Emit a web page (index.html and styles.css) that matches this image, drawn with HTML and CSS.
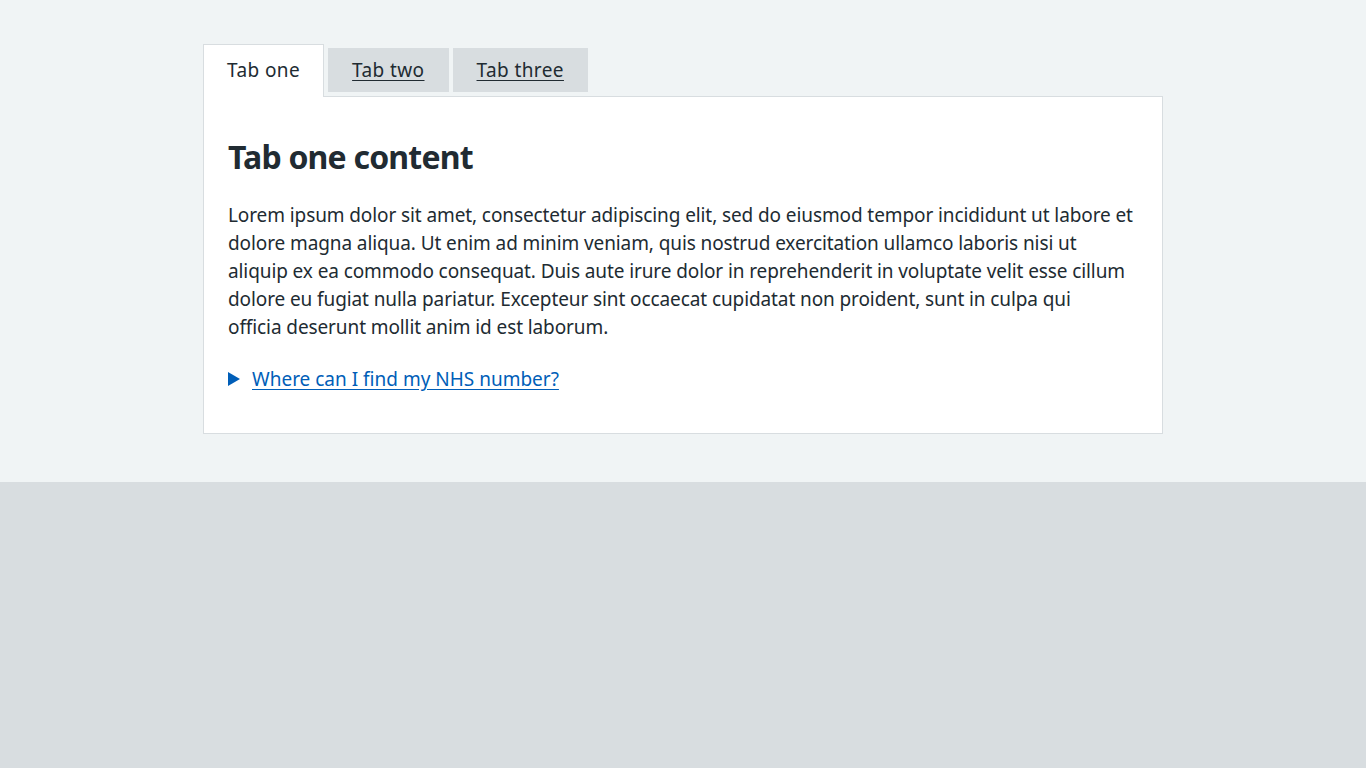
FILE: index.html
```html
<!DOCTYPE html>
<html lang="en">
<head>
<meta charset="utf-8">
<title>Tabs</title>
<link rel="stylesheet" href="styles.css">
</head>
<body>
<main class="wrapper">
  <div class="container">
    <div class="tabs">
      <ul class="tabs-list">
        <li class="tab tab-selected"><a class="tab-link" href="#tab-one">Tab one</a></li>
        <li class="tab"><a class="tab-link" href="#tab-two">Tab two</a></li>
        <li class="tab"><a class="tab-link" href="#tab-three">Tab three</a></li>
      </ul>
      <div class="tab-panel" id="tab-one">
        <h2 class="panel-heading">Tab one content</h2>
        <p class="panel-body">Lorem ipsum dolor sit amet, consectetur adipiscing elit, sed do eiusmod tempor incididunt ut labore et dolore magna aliqua. Ut enim ad minim veniam, quis nostrud exercitation ullamco laboris nisi ut aliquip ex ea commodo consequat. Duis aute irure dolor in reprehenderit in voluptate velit esse cillum dolore eu fugiat nulla pariatur. Excepteur sint occaecat cupidatat non proident, sunt in culpa qui officia&nbsp;deserunt mollit anim id est laborum.</p>
        <div class="details">
          <svg class="details-arrow" width="12" height="14" viewBox="0 0 12 14" aria-hidden="true"><polygon points="0,0 12,7 0,14" fill="#005eb8"/></svg>
          <a class="details-link" href="#">Where can I find my NHS number?</a>
        </div>
      </div>
    </div>
  </div>
</main>
<footer class="footer"></footer>
</body>
</html>
```
FILE: styles.css
```css
html, body {
  margin: 0;
  padding: 0;
}
body {
  font-family: "Noto Sans", "Open Sans", sans-serif;
  color: #212b32;
  background: #d8dde0;
  min-height: 768px;
}
.wrapper {
  background: #f0f4f5;
  padding: 48px 0;
}
.container {
  width: 960px;
  margin: 0 auto;
}
.tabs-list {
  list-style: none;
  margin: 0;
  padding: 0;
  display: flex;
  align-items: flex-start;
}
.tab {
  background: #d8dde0;
  margin-right: 4px;
  padding: 8px 24px;
  font-size: 19px;
  line-height: 28px;
  letter-spacing: 0.4px;
}
.tab-link {
  color: #212b32;
  text-decoration: underline;
  text-underline-offset: 3px;
}
.tab-selected {
  background: #fff;
  border: 1px solid #d8dde0;
  border-bottom: 0;
  margin-top: -4px;
  padding: 11px 23px 13px;
  margin-bottom: -1px;
  position: relative;
  z-index: 1;
}
.tab-selected .tab-link {
  text-decoration: none;
}
.tab-panel {
  background: #fff;
  border: 1px solid #d8dde0;
  padding: 40px 24px 40px;
}
.panel-heading {
  font-size: 32px;
  line-height: 40px;
  font-weight: 700;
  letter-spacing: -0.8px;
  margin: 0 0 24px;
}
.panel-body {
  font-size: 19px;
  line-height: 28px;
  letter-spacing: -0.1px;
  margin: 0 0 24px;
}
.details {
  display: flex;
  align-items: center;
  font-size: 19px;
  line-height: 28px;
}
.details-arrow {
  margin-right: 12px;
  flex: none;
}
.details-link {
  color: #005eb8;
  text-decoration: underline;
  text-underline-offset: 3px;
}
.footer {
  background: #d8dde0;
}
```
